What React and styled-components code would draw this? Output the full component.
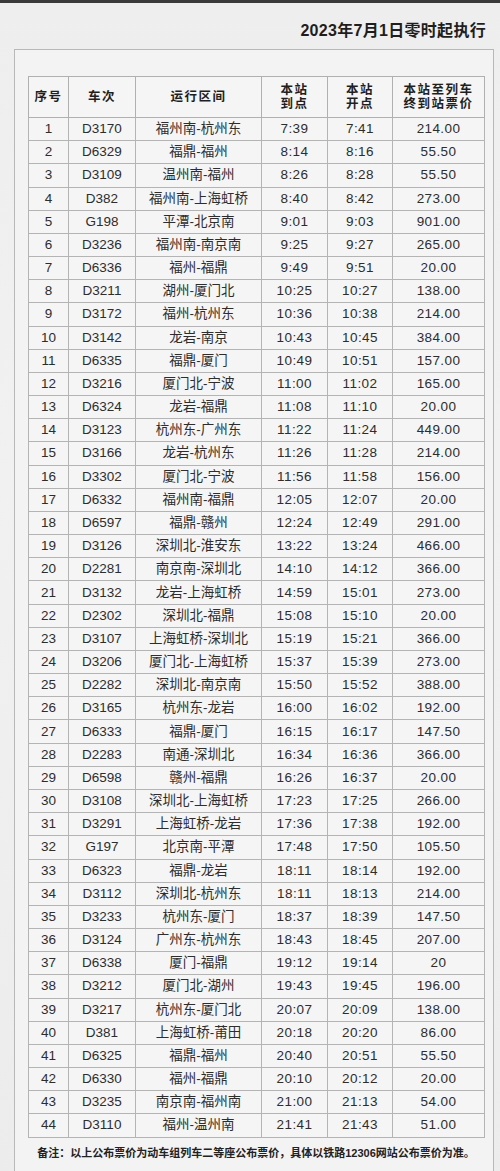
import React from "react";
import styled, { createGlobalStyle } from "styled-components";

const GlobalStyle = createGlobalStyle`
  html, body { margin: 0; padding: 0; }
  body {
    background: #ececec;
    font-family: "Liberation Sans", "Noto Sans CJK SC", sans-serif;
    color: #2a2a2a;
  }
`;

const Page = styled.div`
  width: 500px;
  min-height: 1171px;
  background: linear-gradient(180deg, #eeeeee 0%, #f1f1f1 40%, #ececec 100%);
  overflow: hidden;
`;

const TopStrip = styled.div`
  height: 3px;
  background: #3a3a3a;
`;

const TitleBar = styled.div`
  display: flex;
  justify-content: flex-end;
  padding: 18px 14px 8px 0;
`;

const Title = styled.h1`
  margin: 0;
  font-size: 16px;
  line-height: 20px;
  font-weight: 700;
  color: #1e1e1e;
  letter-spacing: 0.3px;
`;

const Panel = styled.div`
  margin: 0 6px 0 14px;
  border: 1px solid #b8b8b8;
  border-bottom: none;
  padding: 26px 9px 30px 13px;
  background: #f3f3f3;
`;

const Table = styled.table`
  width: 456px;
  table-layout: fixed;
  border-collapse: collapse;
  background: #f5f5f5;
`;

const Col = styled.col`
  width: ${(p) => p.$w}px;
`;

const HeadCell = styled.th`
  border: 1px solid #b0b0b0;
  height: 40px;
  padding: 0;
  font-size: 12.5px;
  line-height: 14px;
  font-weight: 700;
  letter-spacing: 1.5px;
  text-align: center;
  vertical-align: middle;
  color: #1f1f1f;
`;

const Row = styled.tr`
  height: 23.18px;
`;

const Cell = styled.td`
  border: 1px solid #b4b4b4;
  padding: 0;
  font-size: 13.5px;
  line-height: 16px;
  text-align: center;
  vertical-align: middle;
  color: #2d2d2d;
  white-space: nowrap;
  letter-spacing: ${(p) => (p.$spaced ? "0.4px" : "0")};
`;

const Note = styled.p`
  margin: 8px 0 0;
  font-size: 11px;
  line-height: 14px;
  font-weight: 700;
  color: #222;
  text-align: center;
  width: 456px;
`;

const widths = [40, 67, 126, 66, 65, 92];

const rows = [
  ["D3170", "福州南-杭州东", "7:39", "7:41", "214.00"],
  ["D6329", "福鼎-福州", "8:14", "8:16", "55.50"],
  ["D3109", "温州南-福州", "8:26", "8:28", "55.50"],
  ["D382", "福州南-上海虹桥", "8:40", "8:42", "273.00"],
  ["G198", "平潭-北京南", "9:01", "9:03", "901.00"],
  ["D3236", "福州南-南京南", "9:25", "9:27", "265.00"],
  ["D6336", "福州-福鼎", "9:49", "9:51", "20.00"],
  ["D3211", "湖州-厦门北", "10:25", "10:27", "138.00"],
  ["D3172", "福州-杭州东", "10:36", "10:38", "214.00"],
  ["D3142", "龙岩-南京", "10:43", "10:45", "384.00"],
  ["D6335", "福鼎-厦门", "10:49", "10:51", "157.00"],
  ["D3216", "厦门北-宁波", "11:00", "11:02", "165.00"],
  ["D6324", "龙岩-福鼎", "11:08", "11:10", "20.00"],
  ["D3123", "杭州东-广州东", "11:22", "11:24", "449.00"],
  ["D3166", "龙岩-杭州东", "11:26", "11:28", "214.00"],
  ["D3302", "厦门北-宁波", "11:56", "11:58", "156.00"],
  ["D6332", "福州南-福鼎", "12:05", "12:07", "20.00"],
  ["D6597", "福鼎-赣州", "12:24", "12:49", "291.00"],
  ["D3126", "深圳北-淮安东", "13:22", "13:24", "466.00"],
  ["D2281", "南京南-深圳北", "14:10", "14:12", "366.00"],
  ["D3132", "龙岩-上海虹桥", "14:59", "15:01", "273.00"],
  ["D2302", "深圳北-福鼎", "15:08", "15:10", "20.00"],
  ["D3107", "上海虹桥-深圳北", "15:19", "15:21", "366.00"],
  ["D3206", "厦门北-上海虹桥", "15:37", "15:39", "273.00"],
  ["D2282", "深圳北-南京南", "15:50", "15:52", "388.00"],
  ["D3165", "杭州东-龙岩", "16:00", "16:02", "192.00"],
  ["D6333", "福鼎-厦门", "16:15", "16:17", "147.50"],
  ["D2283", "南通-深圳北", "16:34", "16:36", "366.00"],
  ["D6598", "赣州-福鼎", "16:26", "16:37", "20.00"],
  ["D3108", "深圳北-上海虹桥", "17:23", "17:25", "266.00"],
  ["D3291", "上海虹桥-龙岩", "17:36", "17:38", "192.00"],
  ["G197", "北京南-平潭", "17:48", "17:50", "105.50"],
  ["D6323", "福鼎-龙岩", "18:11", "18:14", "192.00"],
  ["D3112", "深圳北-杭州东", "18:11", "18:13", "214.00"],
  ["D3233", "杭州东-厦门", "18:37", "18:39", "147.50"],
  ["D3124", "广州东-杭州东", "18:43", "18:45", "207.00"],
  ["D6338", "厦门-福鼎", "19:12", "19:14", "20"],
  ["D3212", "厦门北-湖州", "19:43", "19:45", "196.00"],
  ["D3217", "杭州东-厦门北", "20:07", "20:09", "138.00"],
  ["D381", "上海虹桥-莆田", "20:18", "20:20", "86.00"],
  ["D6325", "福鼎-福州", "20:40", "20:51", "55.50"],
  ["D6330", "福州-福鼎", "20:10", "20:12", "20.00"],
  ["D3235", "南京南-福州南", "21:00", "21:13", "54.00"],
  ["D3110", "福州-温州南", "21:41", "21:43", "51.00"],
];

export default function App() {
  return (
    <>
      <GlobalStyle />
      <Page>
        <TopStrip />
        <TitleBar>
          <Title>2023年7月1日零时起执行</Title>
        </TitleBar>
        <Panel>
          <Table>
            <colgroup>
              {widths.map((w, i) => (
                <Col key={i} $w={w} />
              ))}
            </colgroup>
            <thead>
              <tr>
                <HeadCell>序号</HeadCell>
                <HeadCell>车次</HeadCell>
                <HeadCell>运行区间</HeadCell>
                <HeadCell>
                  本站
                  <br />
                  到点
                </HeadCell>
                <HeadCell>
                  本站
                  <br />
                  开点
                </HeadCell>
                <HeadCell>
                  本站至列车
                  <br />
                  终到站票价
                </HeadCell>
              </tr>
            </thead>
            <tbody>
              {rows.map((r, i) => (
                <Row key={i}>
                  <Cell>{i + 1}</Cell>
                  <Cell>{r[0]}</Cell>
                  <Cell>{r[1]}</Cell>
                  <Cell $spaced>{r[2]}</Cell>
                  <Cell $spaced>{r[3]}</Cell>
                  <Cell $spaced>{r[4]}</Cell>
                </Row>
              ))}
            </tbody>
          </Table>
          <Note>
            备注：以上公布票价为动车组列车二等座公布票价，具体以铁路12306网站公布票价为准。
          </Note>
        </Panel>
      </Page>
    </>
  );
}
